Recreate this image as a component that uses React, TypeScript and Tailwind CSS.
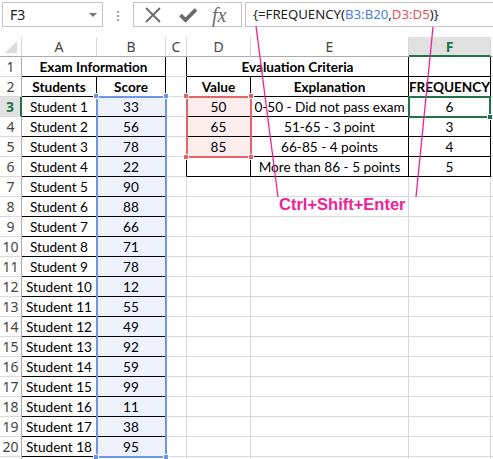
import React from "react";

const COLS = [22, 75, 69, 21, 64, 158, 82, 60];
const LETTERS = ["", "A", "B", "C", "D", "E", "F", ""];
const SCORES = [33, 56, 78, 22, 90, 88, 66, 71, 78, 12, 55, 49, 92, 59, 99, 11, 38, 95];
const VALUES = [50, 65, 85];
const EXPLAIN = ["0-50 - Did not pass exam", "51-65 - 3 point", "66-85 - 4 points", "More than 86 - 5 points"];
const FREQ = [6, 3, 4, 5];

type Cell = { c: number; span: number; text?: string; bold?: boolean; fill?: "blue" | "pink" };

function inTable(r: number, c: number) {
  return (c >= 1 && c <= 2 && r >= 1 && r <= 20) || (c >= 4 && c <= 6 && r >= 1 && r <= 6);
}

function rowCells(r: number): Cell[] {
  if (r === 1)
    return [
      { c: 1, span: 2, text: "Exam Information", bold: true },
      { c: 3, span: 1 },
      { c: 4, span: 2, text: "Evaluation Criteria", bold: true },
      { c: 6, span: 1 },
      { c: 7, span: 1 },
    ];
  if (r === 2)
    return [
      { c: 1, span: 1, text: "Students", bold: true },
      { c: 2, span: 1, text: "Score", bold: true },
      { c: 3, span: 1 },
      { c: 4, span: 1, text: "Value", bold: true },
      { c: 5, span: 1, text: "Explanation", bold: true },
      { c: 6, span: 1, text: "FREQUENCY", bold: true },
      { c: 7, span: 1 },
    ];
  const i = r - 3;
  return [
    { c: 1, span: 1, text: r <= 20 ? `Student ${r - 2}` : undefined },
    { c: 2, span: 1, text: r <= 20 ? String(SCORES[i]) : undefined, fill: r <= 20 ? "blue" : undefined },
    { c: 3, span: 1 },
    { c: 4, span: 1, text: i < 3 ? String(VALUES[i]) : undefined, fill: i < 3 ? "pink" : undefined },
    { c: 5, span: 1, text: EXPLAIN[i] },
    { c: 6, span: 1, text: FREQ[i] !== undefined ? String(FREQ[i]) : undefined },
    { c: 7, span: 1 },
  ];
}

function GridCell({ r, cell }: { r: number; cell: Cell }) {
  const last = cell.c + cell.span - 1;
  let bottom = false;
  const right = inTable(r, last) || inTable(r, last + 1);
  for (let c = cell.c; c <= last; c++) if (inTable(r, c) || inTable(r + 1, c)) bottom = true;
  const fill =
    cell.fill === "blue" ? "bg-[#edf2fc]" : cell.fill === "pink" ? "bg-[#fdeded]" : "bg-white";
  return (
    <div
      className={`flex h-[20px] items-center justify-center overflow-visible whitespace-nowrap border-b border-r pt-[1px] text-[13.6px] text-black ${fill} ${
        right ? "border-r-black" : "border-r-[#d9d9d9]"
      } ${bottom ? "border-b-black" : "border-b-[#d9d9d9]"} ${cell.bold ? "font-bold" : ""} ${
        cell.span === 2 ? "col-span-2" : ""
      }`}
    >
      {cell.text}
    </div>
  );
}

function Handle({ className }: { className: string }) {
  return <div className={`absolute h-[6px] w-[6px] border border-white ${className}`} />;
}

export default function App() {
  const rows = Array.from({ length: 21 }, (_, k) => k + 1);
  return (
    <div className="relative h-[459px] w-[493px] overflow-hidden bg-white font-['Lato',sans-serif]">
      {/* formula bar */}
      <div className="flex h-[37px] items-start pt-[2px] font-['Noto_Sans',sans-serif]">
        <div className="ml-[2px] flex h-[25px] w-[101px] items-center justify-between border border-[#c6c6c6] pl-[7px] pr-[5px] text-[14px] text-[#222]">
          <span>F3</span>
          <span className="h-0 w-0 border-x-[4px] border-t-[4px] border-x-transparent border-t-[#777]" />
        </div>
        <div className="ml-[14px] mt-[9px] flex w-[3px] flex-col gap-[2px]">
          <span className="h-[2px] w-[2px] bg-[#9a9a9a]" />
          <span className="h-[2px] w-[2px] bg-[#9a9a9a]" />
          <span className="h-[2px] w-[2px] bg-[#9a9a9a]" />
        </div>
        <div className="ml-[13px] flex h-[25px] w-[109px] items-center border border-[#c6c6c6] text-[#6a6a6a]">
          <svg width="18" height="18" viewBox="0 0 18 18" className="ml-[10px]">
            <path d="M2 2 L16 16 M16 2 L2 16" stroke="#6a6a6a" strokeWidth="1.8" />
          </svg>
          <svg width="20" height="18" viewBox="0 0 20 18" className="ml-[16px]">
            <path d="M2.5 9 L7.5 14 L18 3.5" fill="none" stroke="#6a6a6a" strokeWidth="3.8" />
          </svg>
          <span className="ml-[14px] font-['Liberation_Serif',serif] text-[20px] italic leading-none">fx</span>
        </div>
        <div className="ml-[3px] flex h-[25px] flex-1 items-center border border-r-0 border-[#c6c6c6] pl-[7px] text-[13.2px] text-[#222]">
          <span>{"{=FREQUENCY("}</span>
          <span className="text-[#4a7fe0]">B3:B20</span>
          <span>,</span>
          <span className="text-[#e0555a]">D3:D5</span>
          <span>{")}"}</span>
        </div>
      </div>

      {/* sheet */}
      <div className="grid" style={{ gridTemplateColumns: COLS.map((w) => `${w}px`).join(" ") }}>
        {LETTERS.map((l, c) =>
          c === 0 ? (
            <div key={c} className="relative h-[20px] border-b border-r border-b-[#ababab] border-r-[#d9d9d9] bg-white">
              <div className="absolute bottom-[3px] right-[4px] h-0 w-0 border-b-[12px] border-l-[12px] border-b-[#dcdcdc] border-l-transparent" />
            </div>
          ) : c === 6 ? (
            <div
              key={c}
              className="flex h-[20px] items-center justify-center border-b-2 border-r border-b-[#217346] border-r-[#d9d9d9] bg-[#e1e1e1] font-['Noto_Sans',sans-serif] text-[14px] font-bold text-[#217346]"
            >
              {l}
            </div>
          ) : (
            <div
              key={c}
              className="flex h-[20px] items-center justify-center border-b border-r border-b-[#ababab] border-r-[#d9d9d9] bg-white font-['Noto_Sans',sans-serif] text-[14px] text-[#444]"
            >
              {l}
            </div>
          )
        )}
        {rows.map((r) => (
          <React.Fragment key={r}>
            <div
              className={`flex h-[20px] items-center justify-center border-b font-['Noto_Sans',sans-serif] text-[14px] ${
                r === 3
                  ? "border-r-2 border-b-[#d9d9d9] border-r-[#217346] bg-[#e1e1e1] font-bold text-[#217346]"
                  : "border-r border-b-[#d9d9d9] border-r-[#ababab] bg-white text-[#444]"
              }`}
            >
              {r <= 20 ? r : ""}
            </div>
            {rowCells(r).map((cell) => (
              <GridCell key={cell.c} r={r} cell={cell} />
            ))}
          </React.Fragment>
        ))}
      </div>

      {/* selection: B3:B20 */}
      <div className="absolute left-[96px] top-[96px] h-[362px] w-[71px] border-2 border-[#6b96ea]" />
      <Handle className="left-[93px] top-[93px] bg-[#6b96ea]" />
      <Handle className="left-[163px] top-[93px] bg-[#6b96ea]" />
      <Handle className="left-[93px] top-[454px] bg-[#6b96ea]" />
      <Handle className="left-[163px] top-[454px] bg-[#6b96ea]" />

      {/* selection: D3:D5 */}
      <div className="absolute left-[186px] top-[96px] h-[62px] w-[66px] border-2 border-[#e36366]" />
      <Handle className="left-[183px] top-[93px] bg-[#e36366]" />
      <Handle className="left-[248px] top-[93px] bg-[#e36366]" />
      <Handle className="left-[183px] top-[154px] bg-[#e36366]" />
      <Handle className="left-[248px] top-[154px] bg-[#e36366]" />

      {/* active cell F3 */}
      <div className="absolute left-[408px] top-[96px] h-[22px] w-[83px] border-2 border-[#217346]" />
      <Handle className="left-[487px] top-[114px] bg-[#217346]" />

      {/* annotation */}
      <svg className="pointer-events-none absolute left-0 top-0" width="493" height="459">
        <line x1="256" y1="26" x2="278" y2="197" stroke="#f0209a" strokeWidth="1.3" />
        <line x1="433" y1="27" x2="416" y2="197" stroke="#f0209a" strokeWidth="1.3" />
      </svg>
      <div className="absolute left-[279px] top-[194px] font-['Liberation_Sans',sans-serif] text-[16.5px] font-bold leading-[20px] text-[#f0209a]">
        Ctrl+Shift+Enter
      </div>
    </div>
  );
}
